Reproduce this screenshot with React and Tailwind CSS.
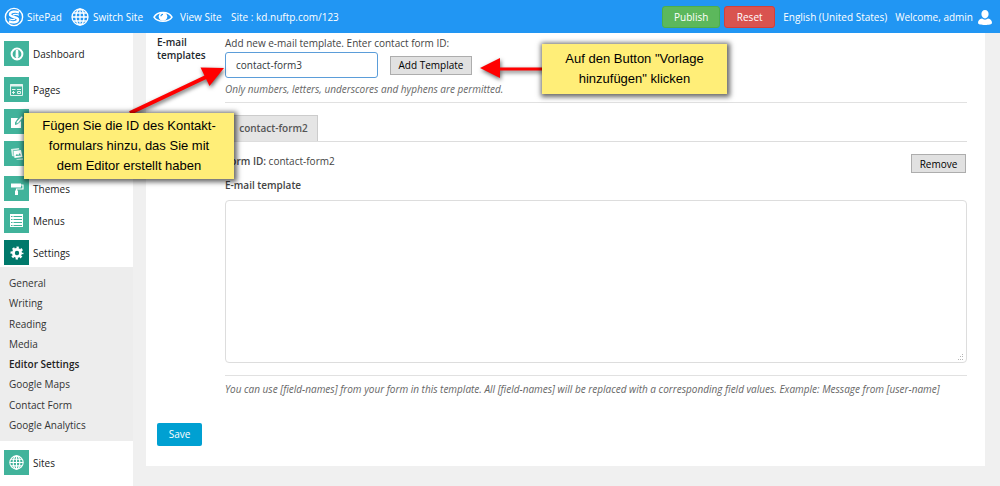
import React, { useState } from 'react';

const SUBMENU = [
  'General',
  'Writing',
  'Reading',
  'Media',
  'Editor Settings',
  'Google Maps',
  'Contact Form',
  'Google Analytics',
];

function Globe({ className }) {
  return (
    <svg viewBox="0 0 18 18" className={className} fill="none" stroke="currentColor" strokeWidth="1.3" aria-hidden="true">
      <circle cx="9" cy="9" r="8" />
      <ellipse cx="9" cy="9" rx="4" ry="8" />
      <path d="M9 1v16M1 9h16M2.300 5h13.400M2.300 13h13.400" />
    </svg>
  );
}

function Logo() {
  return (
    <svg viewBox="0 0 20 20" className="size-5 shrink-0" fill="none" stroke="currentColor" aria-hidden="true">
      <circle cx="10" cy="10" r="8.600" strokeWidth="1.400" />
      <path d="M15 5.600C12 4 6 4.400 6 7.600c0 3 8 1.800 8 4.800 0 3.200-6 3.600-9 2" strokeWidth="2.400" />
      <path d="M15 8.200C13 7.200 9.800 7.300 9 7.900M5 11.800c2 1 5.200.9 6 .3" strokeWidth="1.200" />
    </svg>
  );
}

function Eye() {
  return (
    <svg viewBox="0 0 20 14" className="h-[14px] w-5 shrink-0" aria-hidden="true">
      <path d="M1 7.200C4.500 1 15.500 1 19 7.200c-3.500 5.500-14.500 5.500-18 0Z" fill="none" stroke="currentColor" strokeWidth="1.500" />
      <circle cx="10" cy="6.500" r="4.300" fill="currentColor" />
      <path d="M8 6.300a2 2 0 0 1 2-2" fill="none" stroke="#2196f3" strokeWidth="1.200" />
    </svg>
  );
}

function User() {
  return (
    <svg viewBox="0 0 14 15" className="h-[15px] w-[14px] shrink-0" fill="currentColor" aria-hidden="true">
      <path d="M7 0c2.300 0 3.600 1.700 3.600 4S9 8.400 7 8.400 3.400 6.300 3.400 4 4.700 0 7 0Z" />
      <path d="M4 8.600c1.700 1.500 4.300 1.500 6 0 2.500.5 4 1.900 4 4.400 0 1.300-3 2-7 2s-7-.7-7-2c0-2.500 1.500-3.900 4-4.400Z" />
    </svg>
  );
}

const icons = {
  dashboard: (
    <svg viewBox="0 0 14 14" className="size-[14px]" aria-hidden="true">
      <circle cx="7" cy="7" r="5.400" fill="none" stroke="#fff" strokeWidth="2" />
      <path d="M5.800 3h2.400l.3 6.500a1.500 1.500 0 0 1-3 0Z" fill="#fff" />
      <path d="M5 11h4v2H5z" fill="#fff" />
    </svg>
  ),
  pages: (
    <svg viewBox="0 0 13 12" className="h-3 w-[13px]" fill="none" stroke="#e3f3ef" aria-hidden="true">
      <path d="M.5.500h12v11H.5z" />
      <path d="M0 1.500h13" strokeWidth="2" />
      <path d="M2 5.500h3.500M7 5.500h4M2 8.500h3M7.500 7.500H10.500v2H7.500zM3.500 7v3" />
    </svg>
  ),
  posts: (
    <svg viewBox="0 0 14 14" className="size-[14px]" aria-hidden="true">
      <path d="M1 3h7L5 7.500V10l2.500-.8L11 6v7H1z" fill="#fff" />
      <path d="m6 8.700.5-2L11.500 1l1.700 1.200-5 6Z" fill="#fff" stroke="#41b39b" strokeWidth=".6" />
    </svg>
  ),
  media: (
    <svg viewBox="0 0 14 14" className="size-[14px]" aria-hidden="true">
      <path d="m1 2 8-1 .3 1.500L3 3.500l1 6-2-.5z" fill="#d5eee8" />
      <path d="m3.500 4 7.500-1 1.500 7-8 1z" fill="#fff" />
      <path d="m5.500 9 1.200-2 1.600 1 1.500-2 1.200 2.500z" fill="#41b39b" />
      <path d="m6 12.200 7-1v1.600H7z" fill="#d5eee8" />
    </svg>
  ),
  themes: (
    <svg viewBox="0 0 14 14" className="size-[14px]" aria-hidden="true">
      <path d="M1 1.500h10v4H1z" fill="#fff" />
      <path d="M11 3h2v4H6.500v2" fill="none" stroke="#fff" strokeWidth="1.200" />
      <path d="M5 8.500h3V13H5z" fill="#fff" />
    </svg>
  ),
  menus: (
    <svg viewBox="0 0 13 13" className="size-[13px]" aria-hidden="true">
      <path d="M0 0h13v13H0z" fill="#fff" />
      <path d="M1 2.500h1.500M3.500 2.500H12M1 5.500h1.500M3.500 5.500H12M1 8.500h1.500M3.500 8.500H12M1 11.500h1.500M3.500 11.500H12" stroke="#41b39b" />
    </svg>
  ),
  settings: (
    <svg viewBox="0 0 14 14" className="size-[14px]" fill="none" stroke="#fff" aria-hidden="true">
      <circle cx="7" cy="7" r="3.600" strokeWidth="2.800" />
      <circle cx="7" cy="7" r="5.500" strokeWidth="2" strokeDasharray="2.300 2.020" strokeDashoffset="1.150" />
    </svg>
  ),
  sites: <Globe className="size-[15px] text-white" />,
};

function NavItem({ icon, label, hideLabel, active }) {
  return (
    <a href="#" aria-label={label} className="flex h-[25px] items-center gap-1 pl-1 text-[#222]">
      <span className={`flex size-[25px] shrink-0 items-center justify-center ${active ? 'bg-[#00796b]' : 'bg-[#41b39b]'}`}>
        {icons[icon]}
      </span>
      {!hideLabel && <span className="pt-px">{label}</span>}
    </a>
  );
}

function TopBar() {
  return (
    <header className="flex h-[33px] items-center bg-[#2196f3] pt-px pr-2 pl-1 whitespace-nowrap text-white">
      <a href="#" className="flex w-[67px] items-center gap-[3px]">
        <Logo />
        SitePad
      </a>
      <a href="#" className="flex w-[82px] items-center gap-1">
        <Globe className="size-[18px] shrink-0" />
        Switch Site
      </a>
      <a href="#" className="flex w-[78px] items-center gap-[7px]">
        <Eye />
        View Site
      </a>
      <span>Site : kd.nuftp.com/123</span>
      <div className="ml-auto flex items-center">
        <button className="h-[22px] w-[58px] rounded-[3px] border border-[#4cae4c] bg-[#5cb85c]">Publish</button>
        <button className="ml-1 h-[22px] w-[51px] rounded-[3px] border border-[#d43f3a] bg-[#d9534f]">Reset</button>
        <a href="#" className="ml-2">English (United States)</a>
        <span className="ml-2">Welcome, admin</span>
        <a href="#" aria-label="Account" className="ml-[5px]">
          <User />
        </a>
      </div>
    </header>
  );
}

function Sidebar() {
  return (
    <nav className="w-[133px] shrink-0 bg-white pt-2">
      <NavItem icon="dashboard" label="Dashboard" />
      <div className="mt-[11px] flex flex-col gap-[7px]">
        <NavItem icon="pages" label="Pages" />
        <NavItem icon="posts" label="Posts" hideLabel />
        <NavItem icon="media" label="Media" hideLabel />
      </div>
      <div className="mt-[10px] flex flex-col gap-[7px]">
        <NavItem icon="themes" label="Themes" />
        <NavItem icon="menus" label="Menus" />
        <NavItem icon="settings" label="Settings" active />
      </div>
      <ul className="mt-[2px] flex h-[174px] flex-col justify-between bg-[#ededed] py-[6px] pl-[9px] leading-5 text-[#333]">
        {SUBMENU.map(item => (
          <li key={item}>
            <a href="#" className={item === 'Editor Settings' ? 'font-semibold text-[#222]' : ''}>
              {item}
            </a>
          </li>
        ))}
      </ul>
      <div className="mt-[9px]">
        <NavItem icon="sites" label="Sites" />
      </div>
    </nav>
  );
}

function TemplateForm() {
  const [formId, setFormId] = useState('contact-form3');
  const [body, setBody] = useState('');

  return (
    <form onSubmit={e => e.preventDefault()} className="pt-[3px] pr-[18px] pb-5 pl-[11px]">
      <div className="flex">
        <h2 className="w-[68px] shrink-0 leading-[13px] font-semibold text-[#23282d]">
          E-mail templates
        </h2>
        <div className="min-w-0 flex-1">
          <label htmlFor="form-id" className="block pb-[2px] leading-[14px]">
            Add new e-mail template. Enter contact form ID:
          </label>
          <div className="flex items-center gap-3">
            <input
              id="form-id"
              value={formId}
              onChange={e => setFormId(e.target.value)}
              className="h-[26px] w-[153px] rounded-[3px] border border-[#5b9dd9] bg-white px-[10px] text-[#32373c] outline-none"
            />
            <button className="h-[19px] w-[82px] border border-[#adadad] bg-[#e1e1e1] leading-4 text-black">
              Add Template
            </button>
          </div>
          <p className="mt-[3px] border-b border-[#e1e1e1] pb-[5px] leading-4 text-[#666] italic">
            Only numbers, letters, underscores and hyphens are permitted.
          </p>

          <div className="mt-3 flex border-b border-[#ddd]">
            <button className="h-[26px] w-[93px] border border-b-0 border-[#ccc] bg-[#e5e5e5] pl-1 font-semibold whitespace-nowrap text-[#555]">
              contact-form2
            </button>
          </div>

          <div className="mt-3 flex items-center justify-between pr-px">
            <p className="pb-1">
              <strong className="font-semibold">Form ID:</strong> contact-form2
            </p>
            <button className="h-[19px] w-[55px] border border-[#adadad] bg-[#e1e1e1] leading-4 text-black">
              Remove
            </button>
          </div>
          <label htmlFor="template" className="mt-[2px] block leading-5 font-semibold">
            E-mail template
          </label>
          <div className="relative mt-[5px]">
            <textarea
              id="template"
              value={body}
              onChange={e => setBody(e.target.value)}
              className="block h-[163px] w-full resize-none rounded-[4px] border border-[#ddd] p-2 outline-none"
            />
            <svg viewBox="0 0 7 7" className="absolute right-[3px] bottom-[2px] size-[7px]" fill="#b5b5b5" aria-hidden="true">
              <path d="M5 0h1v1H5zM3 2h1v1H3zM5 2h1v1H5zM1 5h1v1H1zM3 5h1v1H3zM5 5h1v1H5z" />
            </svg>
          </div>
          <p className="mt-3 border-t border-[#e1e1e1] pt-[5px] leading-4 text-[#666] italic">
            You can use [field-names] from your form in this template. All [field-names] will be replaced with a
            corresponding field values. Example: Message from [user-name]
          </p>
        </div>
      </div>
      <button className="mt-[26px] h-[23px] w-[45px] rounded-[2px] bg-[#00a0d2] text-white">Save</button>
    </form>
  );
}

function Callout({ className, children }) {
  return (
    <div
      className={`absolute flex items-center justify-center bg-[#ffee78] text-center font-['Liberation_Sans',Arial,sans-serif] text-[13px] leading-5 whitespace-pre text-black shadow-[1px_1px_5px_2px_rgba(0,0,0,0.6)] ${className}`}
    >
      {children}
    </div>
  );
}

export default function App() {
  return (
    <div className="relative flex min-h-screen flex-col overflow-hidden bg-[#f0f0f0] font-['Open_Sans',sans-serif] text-[10px] text-[#444]">
      <TopBar />
      <div className="flex flex-1 items-stretch">
        <Sidebar />
        <main className="min-w-0 flex-1 pr-[15px] pl-[13px]">
          <div className="bg-white">
            <TemplateForm />
          </div>
        </main>
      </div>

      <svg
        viewBox="0 0 600 140"
        className="pointer-events-none absolute top-0 left-0 h-[140px] w-[600px] [filter:drop-shadow(1px_2px_2px_rgba(0,0,0,0.6))]"
        fill="#f00"
        aria-hidden="true"
      >
        <path d="M130 113 206 77" stroke="#f00" strokeWidth="4" />
        <path d="m224 68-23.500-.5 9 18.500z" />
        <path d="M545 69H498" stroke="#f00" strokeWidth="3" />
        <path d="m480 68 20-10v20z" />
      </svg>
      <Callout className="top-[113px] left-6 h-[66px] w-[210px]">
        {'Fügen Sie die ID des Kontakt-\nformulars hinzu, das Sie mit\ndem Editor erstellt haben'}
      </Callout>
      <Callout className="top-11 left-[542px] h-[50px] w-[185px]">
        {'Auf den Button "Vorlage\nhinzufügen" klicken'}
      </Callout>
    </div>
  );
}
